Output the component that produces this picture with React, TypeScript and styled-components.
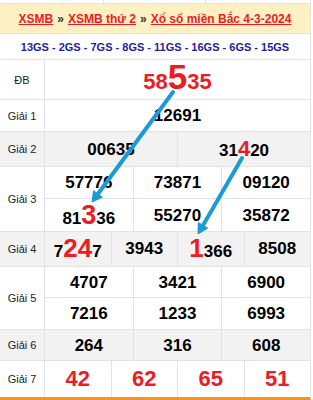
import * as React from 'react';
import styled, { createGlobalStyle } from 'styled-components';

const GlobalStyle = createGlobalStyle`
  html, body {
    margin: 0;
    padding: 0;
    background: #fff;
  }
  body {
    font-family: "Liberation Sans", Arial, sans-serif;
  }
`;

const LINE = '#e2e2e2';
const RED = '#ed1c24';

type Piece = { text: string; big?: number };
type Cell = Piece[];

interface Prize {
  label: string;
  cols: number;
  rowH: number[];
  shade?: boolean;
  red?: boolean;
  size?: number;
  lift?: number;
  values: Cell[];
}

// plain number helper
const n = (s: string): Cell => [{ text: s }];

const prizes: Prize[] = [
  {
    label: 'ĐB',
    cols: 1,
    rowH: [39],
    red: true,
    size: 22,
    lift: 6,
    values: [[{ text: '58' }, { text: '5', big: 35 }, { text: '35' }]],
  },
  { label: 'Giải 1', cols: 1, rowH: [31], values: [n('12691')] },
  { label: 'Giải 2', cols: 2, rowH: [34], shade: true, values: [n('00635'), [{ text: '31' }, { text: '4', big: 22 }, { text: '20' }]] },
  {
    label: 'Giải 3',
    cols: 3,
    rowH: [31, 32],
    values: [n('57776'), n('73871'), n('09120'), [{ text: '81' }, { text: '3', big: 27 }, { text: '36' }], n('55270'), n('35872')],
  },
  {
    label: 'Giải 4',
    cols: 4,
    rowH: [34],
    shade: true,
    lift: 2,
    values: [[{ text: '7' }, { text: '24', big: 26 }, { text: '7' }], n('3943'), [{ text: '1', big: 26 }, { text: '366' }], n('8508')],
  },
  { label: 'Giải 5', cols: 3, rowH: [30, 31], values: [n('4707'), n('3421'), n('6900'), n('7216'), n('1233'), n('6993')] },
  { label: 'Giải 6', cols: 3, rowH: [30], shade: true, values: [n('264'), n('316'), n('608')] },
  { label: 'Giải 7', cols: 4, rowH: [36], red: true, size: 22, values: [n('42'), n('62'), n('65'), n('51')] },
];

const Board = styled.div`
  position: relative;
  width: 310px;
  border-right: 1px solid ${LINE};
  border-bottom: 3px solid #f7941d;
`;

const Strip = styled.div`
  display: grid;
  grid-template-columns: 104px 102px 1fr;
  height: 3px;
  border-bottom: 1px solid ${LINE};
`;

const StripCell = styled.div`
  border-right: 1px solid ${LINE};
  &:last-child {
    border-right: none;
  }
`;

const Title = styled.div`
  height: 29px;
  display: flex;
  align-items: center;
  justify-content: center;
  background: #fdf1c4;
  border-bottom: 1px solid ${LINE};
  font-size: 12px;
  font-weight: bold;
  color: #333;
  white-space: nowrap;
`;

const Crumb = styled.a`
  color: ${RED};
  text-decoration: underline;
  cursor: pointer;
`;

const Sep = styled.span`
  margin: 0 4px;
`;

const Counts = styled.div`
  height: 25px;
  display: flex;
  align-items: center;
  justify-content: center;
  border-bottom: 1px solid ${LINE};
  font-size: 11px;
  font-weight: bold;
  color: #1f1f9c;
  white-space: nowrap;
`;

const PrizeRow = styled.div<{ $shade?: boolean }>`
  display: grid;
  grid-template-columns: 45px 1fr;
  background: ${(p) => (p.$shade ? '#f2f2f2' : '#fff')};
  border-bottom: 1px solid ${LINE};
  &:last-of-type {
    border-bottom: none;
  }
`;

const Label = styled.div`
  display: flex;
  align-items: center;
  justify-content: center;
  border-right: 1px solid ${LINE};
  font-size: 11px;
  color: #222;
`;

const Values = styled.div<{ $cols: number }>`
  display: grid;
  grid-template-columns: repeat(${(p) => p.$cols}, 1fr);
  gap: 1px;
  background: ${LINE};
`;

const Value = styled.div<{ $shade?: boolean; $red?: boolean; $size: number; $lift: number }>`
  display: flex;
  align-items: center;
  justify-content: center;
  padding-bottom: ${(p) => p.$lift}px;
  background: ${(p) => (p.$shade ? '#f2f2f2' : '#fff')};
  color: ${(p) => (p.$red ? RED : '#000')};
  font-size: ${(p) => p.$size}px;
  font-weight: bold;
  line-height: 1;
`;

const Digits = styled.span`
  display: inline-flex;
  align-items: baseline;
`;

const Big = styled.span<{ $size: number }>`
  color: ${RED};
  font-size: ${(p) => p.$size}px;
`;

const Overlay = styled.svg`
  position: absolute;
  left: 0;
  top: 0;
  pointer-events: none;
`;

const Arrow: React.FC<{ x1: number; y1: number; x2: number; y2: number }> = ({ x1, y1, x2, y2 }) => {
  const dx = x2 - x1;
  const dy = y2 - y1;
  const len = Math.hypot(dx, dy);
  const ux = dx / len;
  const uy = dy / len;
  const head = 10;
  const half = 5.5;
  const bx = x2 - ux * head;
  const by = y2 - uy * head;
  const pts = `${x2},${y2} ${bx - uy * half},${by + ux * half} ${bx + uy * half},${by - ux * half}`;
  return (
    <g fill="#1c9ad8" stroke="#1c9ad8">
      <line x1={x1} y1={y1} x2={bx + ux} y2={by + uy} strokeWidth={4} strokeLinecap="round" />
      <polygon points={pts} strokeWidth={1} strokeLinejoin="round" />
    </g>
  );
};

const App: React.FC = () => {
  return (
    <>
      <GlobalStyle />
      <Board>
        <Strip>
          <StripCell />
          <StripCell />
          <StripCell />
        </Strip>
        <Title>
          <Crumb>XSMB</Crumb>
          <Sep>»</Sep>
          <Crumb>XSMB thứ 2</Crumb>
          <Sep>»</Sep>
          <Crumb>Xổ số miền Bắc 4-3-2024</Crumb>
        </Title>
        <Counts>13GS - 2GS - 7GS - 8GS - 11GS - 16GS - 6GS - 15GS</Counts>
        {prizes.map((p) => (
          <PrizeRow key={p.label} $shade={p.shade}>
            <Label>{p.label}</Label>
            <Values $cols={p.cols} style={{ gridTemplateRows: p.rowH.map((h) => `${h}px`).join(' ') }}>
              {p.values.map((cell, i) => (
                <Value key={i} $shade={p.shade} $red={p.red} $size={p.size ?? 17} $lift={p.lift ?? 0}>
                  <Digits>
                    {cell.map((piece, j) =>
                      piece.big ? (
                        <Big key={j} $size={piece.big}>
                          {piece.text}
                        </Big>
                      ) : (
                        <span key={j}>{piece.text}</span>
                      )
                    )}
                  </Digits>
                </Value>
              ))}
            </Values>
          </PrizeRow>
        ))}
        <Overlay width={313} height={400}>
          <Arrow x1={173} y1={92} x2={92} y2={202} />
          <Arrow x1={242} y1={158} x2={198} y2={234} />
        </Overlay>
      </Board>
    </>
  );
};

export default App;
